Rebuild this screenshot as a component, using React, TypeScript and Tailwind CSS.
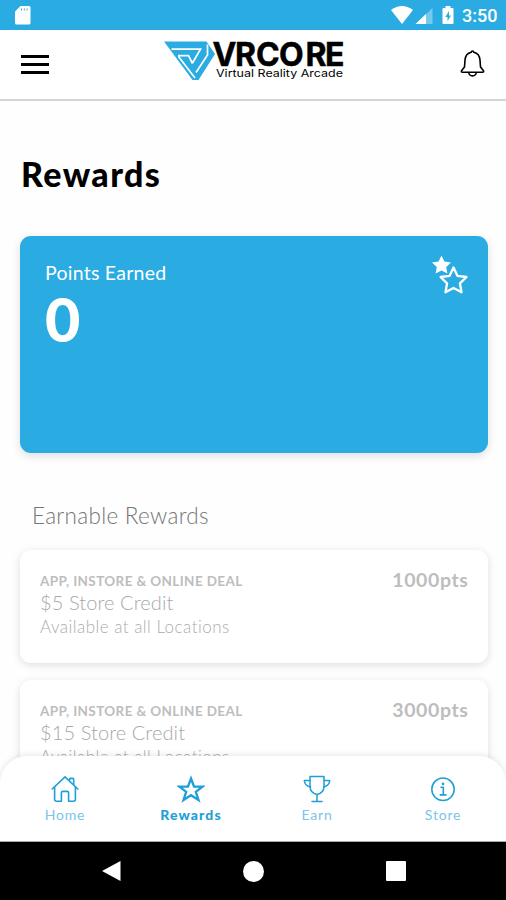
import clsx from "clsx";
import type { ReactNode } from "react";

interface Reward {
  id: number;
  kind: string;
  title: string;
  location: string;
  points: number;
}

interface Tab {
  label: string;
  icon: ReactNode;
  active?: boolean;
}

const rewards: Reward[] = [
  {
    id: 1,
    kind: "APP, INSTORE & ONLINE DEAL",
    title: "$5 Store Credit",
    location: "Available at all Locations",
    points: 1000,
  },
  {
    id: 2,
    kind: "APP, INSTORE & ONLINE DEAL",
    title: "$15 Store Credit",
    location: "Available at all Locations",
    points: 3000,
  },
];

function StarIcon() {
  return (
    <svg width="28" height="28" viewBox="0 0 28 28" fill="none" stroke="#1e9fd8" strokeWidth="2.3">
      <path d="M14 3.500 17 11.500 25.500 11.700 18.800 16.800 21.500 25 14 20.200 6.500 25 9.200 16.800 2.500 11.700 11 11.500Z" />
    </svg>
  );
}

function HomeIcon() {
  return (
    <svg width="28" height="28" viewBox="0 0 28 28" fill="none" stroke="#1e9fd8" strokeWidth="1.6" strokeLinejoin="round" strokeLinecap="round">
      <path d="M1.200 14 14 1.800 26.800 14" />
      <path d="M3.600 12v12.600q0 1.600 1.600 1.600h5.200v-8.400q0-1.400 1.400-1.400h4.400q1.400 0 1.400 1.400v8.400h5.200q1.600 0 1.600-1.600V12" />
      <path d="M18.500 5.500V4.400q0-1 1-1h2.200q1 0 1 1v5.200" />
    </svg>
  );
}

function TrophyIcon() {
  return (
    <svg width="28" height="28" viewBox="0 0 28 28" fill="none" stroke="#1e9fd8" strokeWidth="1.5" strokeLinejoin="round" strokeLinecap="round">
      <path d="M7 1.500h14v10c0 4.600-3.200 7-7 8-3.800-1-7-3.400-7-8Z" />
      <path d="M7 5.500H1.300c.2 3.500 2.200 5.600 6.200 6.500M21 5.500h5.700c-.2 3.500-2.200 5.600-6.200 6.500" />
      <path d="M14 19.500v6.700M9 26.400h10" />
    </svg>
  );
}

function InfoIcon() {
  return (
    <svg width="28" height="28" viewBox="0 0 28 28" fill="none" stroke="#1e9fd8" strokeWidth="1.500">
      <circle cx="14" cy="14.300" r="11.200" />
      <path d="M11.500 12.300h2.800v7.400M10.700 19.900h6.800" strokeWidth="1.600" />
      <circle cx="14" cy="8.900" r="1.300" fill="#1e9fd8" stroke="none" />
    </svg>
  );
}

const tabs: Tab[] = [
  { label: "Home", icon: <HomeIcon /> },
  { label: "Rewards", icon: <StarIcon />, active: true },
  { label: "Earn", icon: <TrophyIcon /> },
  { label: "Store", icon: <InfoIcon /> },
];

function Logo() {
  return (
    <svg className="overflow-visible" width="182" height="42" viewBox="0 0 182 42">
      <path d="M0 .500H42.500L51 13 34.500 39H28.500Z" fill="#2aace2" />
      {/* channels between the interlocking bands */}
      <path d="M7.500 8.200H36.500L28.500 22M14 14.700H24.500L28.500 22.500M14.500 15.500 31 37M43.500 3.500V14L32 31.500" fill="none" stroke="#fff" strokeWidth="1.700" />
      <text x="48.500 71 92 115 141.500 161" y="24.500" strokeWidth=".5" className="fill-black stroke-black font-['Inter'] text-[32px] font-bold">
        VRCORE
      </text>
      <text x="52" y="36" textLength="127" lengthAdjust="spacingAndGlyphs" className="fill-black font-['Inter'] text-[10.5px]">
        Virtual Reality Arcade
      </text>
    </svg>
  );
}

function StatusBar() {
  return (
    <div className="flex h-[30px] shrink-0 items-center justify-between bg-[#2aace2] pr-[9px] pl-[15px] text-white">
      <svg width="16" height="20" viewBox="0 0 16 20">
        <path d="M5.500 1H14q1.500 0 1.500 1.500V18q0 1.500-1.500 1.500H1.500Q0 19.500 0 18V6.500Z" fill="#fff" />
        <path d="M6.500 3.500v2M9.300 3.500v2M12.100 3.500v2" stroke="#2aace2" strokeWidth="1" />
      </svg>
      <div className="flex items-center">
        <svg width="51" height="20" viewBox="0 0 51 20" fill="#fff">
          <path d="M0 5Q11-3 22 5L11 19Z" />
          <path d="M24.500 19 41.500 3V19Z" opacity=".35" />
          <path d="M24.500 19 35 9V19Z" />
        </svg>
        <svg width="12" height="20" viewBox="0 0 12 20">
          <path d="M3.500 1h5v2h2q1 0 1 1V18q0 1-1 1h-9q-1 0-1-1V4q0-1 1-1h2Z" fill="#fff" />
          <path d="M7 6 3.300 12h2.200v4.300L9 10.500H7Z" fill="#2aace2" />
        </svg>
        <span className="mt-[2px] ml-[8px] w-[35px] font-['Roboto'] text-[18px] leading-5 font-medium">3:50</span>
      </div>
    </div>
  );
}

function Header() {
  return (
    <header className="flex h-[71px] shrink-0 items-start border-b-2 border-[#d4d4d4] bg-white pr-[21px] pl-[21px]">
      <button className="mt-[25px] flex w-7 flex-col gap-[5px]">
        <span className="h-[3px] bg-black" />
        <span className="h-[3px] bg-black" />
        <span className="h-[3px] bg-black" />
      </button>
      <div className="mt-[11px] ml-[115px]">
        <Logo />
      </div>
      <svg className="mt-[19px] ml-auto" width="25" height="29" viewBox="0 0 25 29" fill="none" stroke="#000" strokeWidth="1.600" strokeLinejoin="round">
        <path d="M12.500 2c.700 0 1.200.500 1.300 1.300 3.900.900 5.900 3.900 6.200 7.700l.500 7 3 3.800q.500 1.400-.900 1.400H2.400q-1.400 0-.9-1.400L4.500 18l.5-7c.3-3.800 2.300-6.800 6.200-7.700.1-.8.600-1.300 1.300-1.300Z" />
        <path d="M8.700 23.500c.3 2.200 1.800 3.400 3.800 3.400s3.500-1.200 3.800-3.400" />
      </svg>
    </header>
  );
}

function PointsCard() {
  return (
    <section className="flex h-[217px] shrink-0 justify-between rounded-[11px] bg-[#2aace2] pt-[19px] pr-[20px] pl-[25px] text-white shadow-[0_3px_10px_rgba(0,0,0,0.13)]">
      <div>
        <p className="mt-[6px] text-[19.5px] leading-6 tracking-[0.25px]">Points Earned</p>
        <p className="mt-[3px] text-[61px] leading-[62px] font-black">0</p>
      </div>
      <svg width="37" height="40" viewBox="0 0 37 40">
        <path d="M10.500.5 13.400 6.600 20 7.500 15.200 12 16.400 18.500 10.500 15.400 4.600 18.500 5.800 12 1 7.500 7.600 6.600Z" fill="#fff" />
        <path
          d="M22.500 12.500 26.400 20.800 35.500 22 28.900 28.300 30.500 37.300 22.500 33 14.500 37.300 16.100 28.300 9.500 22 18.600 20.800Z"
          fill="#2aace2"
          stroke="#fff"
          strokeWidth="2.300"
          strokeLinejoin="round"
        />
      </svg>
    </section>
  );
}

function RewardCard({ reward }: { reward: Reward }) {
  return (
    <li className="flex h-[113px] shrink-0 justify-between rounded-[11px] bg-white px-[20px] shadow-[0_2px_9px_rgba(0,0,0,0.13)]">
      <div>
        <p className="mt-[21px] text-[13.5px] leading-5 font-bold tracking-[0.38px] text-[#bdbdbd]">{reward.kind}</p>
        <p className="text-[20px] leading-[23px] font-light tracking-[0.1px] text-[#a8a8a8]">{reward.title}</p>
        <p className="text-[17px] leading-[25px] font-light tracking-[0.47px] text-[#acacac]">{reward.location}</p>
      </div>
      <p className="mt-[18px] -mr-[0.5px] text-[19.5px] leading-6 font-bold tracking-[0.6px] text-[#bdbdbd]">{reward.points}pts</p>
    </li>
  );
}

function TabBar() {
  return (
    <nav className="relative -mt-[86px] grid h-[86px] shrink-0 grid-cols-4 rounded-t-[27px] border-b border-[#aaa] bg-white pl-[2px] shadow-[0_-1px_6px_rgba(0,0,0,0.1)]">
      {tabs.map((tab) => (
        <button key={tab.label} className="flex flex-col items-center pt-[19px]">
          {tab.icon}
          <span
            className={clsx(
              "mt-[2px] text-[14px] leading-5",
              tab.active ? "font-black tracking-[1.1px] text-[#1e9fd8]" : "tracking-[0.8px] text-[#7cc4e8]",
            )}
          >
            {tab.label}
          </span>
        </button>
      ))}
    </nav>
  );
}

function SystemNav() {
  return (
    <div className="flex h-[58px] shrink-0 items-center justify-between bg-black pr-[100px] pl-[101px]">
      <svg width="20" height="22" viewBox="0 0 20 22">
        <path d="M19.500 1v20L1 11Z" fill="#fff" />
      </svg>
      <span className="h-[21px] w-[21px] rounded-full bg-white" />
      <span className="h-[20px] w-[20px] rounded-[1px] bg-white" />
    </div>
  );
}

export default function App() {
  return (
    <div className="flex h-[900px] w-[506px] flex-col overflow-hidden bg-white font-['Lato',sans-serif] [font-variant-ligatures:none]">
      <StatusBar />
      <Header />
      <main className="flex min-h-0 flex-1 flex-col overflow-hidden bg-[#fefefe] pr-[18px] pl-5">
        <h1 className="mt-[52px] mb-[42px] ml-px text-[34px] leading-[41px] font-black tracking-[1.4px] text-black">Rewards</h1>
        <PointsCard />
        <h2 className="mt-[49px] ml-[12px] text-[22.5px] leading-7 font-light tracking-[0.3px] text-[#757575]">Earnable Rewards</h2>
        <ul className="mt-[20px] flex flex-col gap-[17px]">
          {rewards.map((reward) => (
            <RewardCard key={reward.id} reward={reward} />
          ))}
        </ul>
      </main>
      <TabBar />
      <SystemNav />
    </div>
  );
}
